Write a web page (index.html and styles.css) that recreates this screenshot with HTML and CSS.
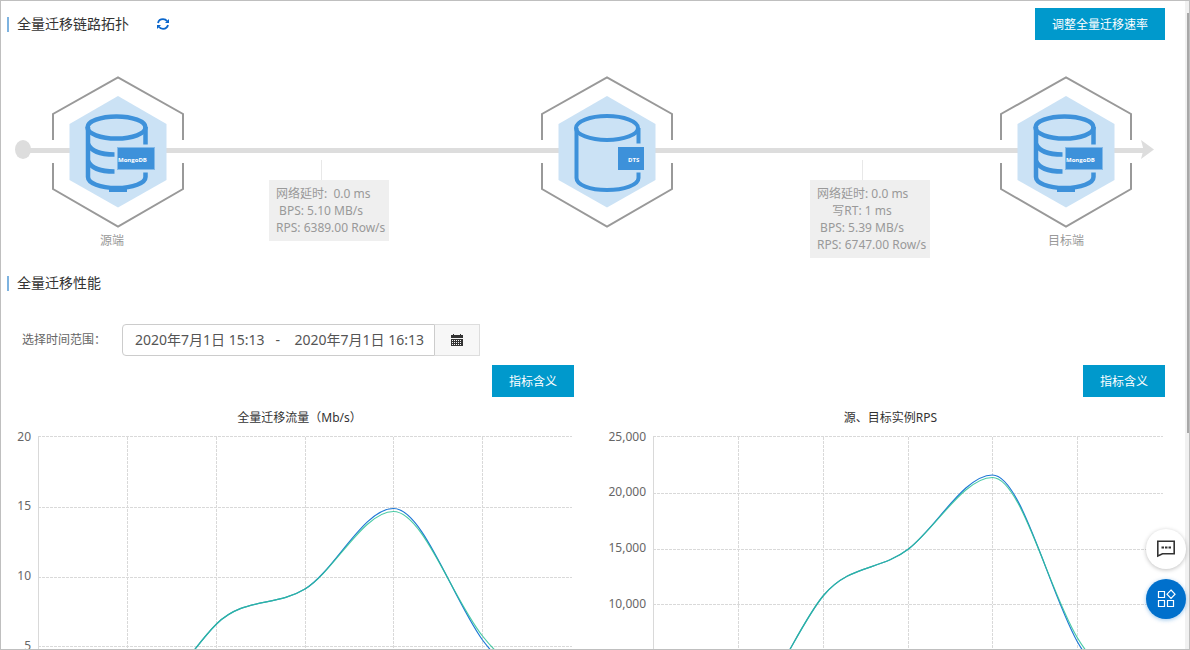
FILE: index.html
```html
<!DOCTYPE html>
<html lang="zh-CN">
<head>
<meta charset="utf-8">
<title>全量迁移</title>
<meta name="viewport" content="width=device-width, initial-scale=1">
<link rel="stylesheet" href="styles.css">
</head>
<body>
<div class="window">
  <main class="content">
    <header class="toolbar">
      <h2 class="section-title">全量迁移链路拓扑</h2>
      <button class="refresh" type="button" aria-label="刷新">
        <svg width="12" height="12" viewBox="0 0 12 12" fill="none" stroke="#0a66cc" stroke-width="1.8">
          <path d="M1 5C1.600 2.500 3.600 1.200 6 1.200C7.800 1.200 9.200 2 10.200 3.300"/>
          <path d="M11 7C10.400 9.500 8.400 10.800 6 10.800C4.200 10.800 2.800 10 1.800 8.700"/>
          <path d="M12 1V5H8ZM0 11V7H4Z" fill="#0a66cc" stroke="none"/>
        </svg>
      </button>
      <button class="primary toolbar-action" type="button">调整全量迁移速率</button>
    </header>

    <section class="topology">
      <svg class="stub" width="36" height="152" viewBox="0 0 36 152" fill="#ddd">
        <ellipse cx="8" cy="73.500" rx="8" ry="9.500"/>
        <rect x="8" y="72" width="28" height="5"/>
      </svg>
      <div class="node">
        <svg width="134" height="152" viewBox="0 0 134 152">
          <use href="#frame"/>
          <use href="#mongo"/>
        </svg>
        <span class="node-label">源端&emsp;</span>
      </div>
      <div class="link link-source">
        <div class="line"></div>
        <div class="metrics">
          <p>网络延时:&nbsp; 0.0 ms</p>
          <p>BPS: 5.10 MB/s</p>
          <p>RPS: 6389.00 Row/s</p>
        </div>
      </div>
      <div class="node">
        <svg width="134" height="152" viewBox="0 0 134 152">
          <use href="#frame"/>
          <g fill="none" stroke="#3d91da" stroke-width="4">
            <ellipse cx="67" cy="52" rx="31" ry="12"/>
            <path d="M36.500 52V102C36.500 109 50 114 67 114S98.500 109 98.500 102V96.500M98.500 52V67.500"/>
          </g>
          <rect x="78" y="71" width="26" height="23" fill="#3d91da"/>
          <text class="tag" x="88" y="86">DTS</text>
        </svg>
      </div>
      <div class="link link-target">
        <div class="line"></div>
        <div class="metrics">
          <p>网络延时: 0.0 ms</p>
          <p>写RT: 1 ms</p>
          <p>BPS: 5.39 MB/s</p>
          <p>RPS: 6747.00 Row/s</p>
        </div>
      </div>
      <div class="node">
        <svg width="134" height="152" viewBox="0 0 134 152">
          <use href="#frame"/>
          <use href="#mongo"/>
        </svg>
        <span class="node-label">目标端</span>
      </div>
      <svg class="stub" width="21" height="152" viewBox="0 0 21 152" fill="#ddd">
        <rect y="72" width="12" height="5"/>
        <path d="M8 64L21 73.500L8 83L10.500 73.500Z"/>
      </svg>
    </section>

    <h2 class="section-title">全量迁移性能</h2>

    <form class="range">
      <label for="range">选择时间范围：</label>
      <div class="range-group">
        <input id="range" type="text" value="2020年7月1日 15:13 &nbsp; - &nbsp;&nbsp; 2020年7月1日 16:13">
        <button type="button" aria-label="打开日历">
          <svg width="12" height="12" viewBox="0 0 12 12" fill="#333">
            <path d="M0 1H2V0H3V1H9V0H10V1H12V4H0Z"/>
            <path d="M0 5H12V12H0Z"/>
            <path d="M1 6.500H11M1 8.500H11M1 10.500H11" stroke="#f7f7f7" stroke-dasharray="1 1" stroke-width="1"/>
          </svg>
        </button>
      </div>
    </form>

    <div class="charts">
      <section class="chart">
        <button class="primary" type="button">指标含义</button>
        <h3>全量迁移流量（Mb/s）</h3>
        <svg viewBox="0 0 567 300">
          <path class="grid" d="M31 8.500H565M31 79.500H565M31 149.500H565M31 218.500H565M31 288.500H565M120.500 9V288M209.500 9V288M298.500 9V288M386.500 9V288M475.500 9V288"/>
          <path class="axis" d="M31.500 9V288"/>
          <g class="ticks"><text x="24" y="13">20</text><text x="24" y="82">15</text><text x="24" y="152">10</text><text x="24" y="222">5</text></g>
          <path class="series-a" d="M120.500 284C150 284 180 225 209.500 196C237 169 268.500 179 298 161C327.500 143 356.500 80.500 386.500 80.500C415.500 80.500 445.500 170 475.500 212C504 250 535 262 565 270"/>
          <path class="series-b" d="M120.500 284C150 284 180 225 209.500 196C237 169 268.500 179 298 161C327.500 143 356.500 83.500 386.500 83.500C415.500 83.500 445.500 170 475.500 208C504 244 535 258 565 266"/>
        </svg>
      </section>
      <section class="chart">
        <button class="primary" type="button">指标含义</button>
        <h3>源、目标实例RPS</h3>
        <svg viewBox="0 0 567 300">
          <path class="grid" d="M55 8.500H565M55 65.500H565M55 121.500H565M55 176.500H565M55 232.500H565M55 288.500H565M140.500 9V288M225.500 9V288M310.500 9V288M394.500 9V288M479.500 9V288"/>
          <path class="axis" d="M55.500 9V288"/>
          <g class="ticks"><text x="48" y="13">25,000</text><text x="48" y="68">20,000</text><text x="48" y="124">15,000</text><text x="48" y="180">10,000</text></g>
          <path class="series-a" d="M140.500 281C169 281 198 200 225.500 167.500C252 136 282 143 310.500 121C338.500 99 366.500 47 394.500 47C423 47 451 163 479.500 214C503 255 537 268 565 274"/>
          <path class="series-b" d="M140.500 281C169 281 198 200 225.500 167.500C252 136 282 143 310.500 121C338.500 99 366.500 49.500 394.500 49.500C423 49.500 451 163 479.500 210C505 252 537 265 565 272"/>
        </svg>
      </section>
    </div>
  </main>
  <div class="scroll-track"><div class="scroll-thumb"></div></div>

  <div class="floating">
    <button class="round" type="button" aria-label="咨询">
      <svg width="20" height="20" viewBox="0 0 20 20" fill="none" stroke="#333" stroke-width="1.6">
        <path d="M1.800 17V2.300H18.200V14.700H6.500Z"/>
        <path d="M5.500 8.500H8M9 8.500H11.500M12.500 8.500H15" stroke-width="2.200"/>
      </svg>
    </button>
    <button class="round round-blue" type="button" aria-label="应用">
      <svg width="20" height="20" viewBox="0 0 20 20" fill="none" stroke="#fff" stroke-width="1.200">
        <path d="M2.500 2.500H8.500V8.500H2.500ZM2.500 11.500H8.500V17.500H2.500ZM11.500 11.500H17.500V17.500H11.500ZM15 1L19 5.200L15 9.400L11 5.200Z"/>
      </svg>
    </button>
  </div>
</div>

<svg class="defs" width="0" height="0" aria-hidden="true">
  <defs>
    <g id="frame">
      <path d="M0 72H19V77H0ZM115 72H134V77H115Z" fill="#ddd"/>
      <path d="M2 64V38L67 1.500L132 38V64M2 87V113L67 150.500L132 113V87" fill="none" stroke="#999" stroke-width="2"/>
      <path d="M67 20L115.500 48V104L67 131.500L18.500 104V48Z" fill="#cbe2f5"/>
    </g>
    <g id="mongo">
      <g fill="none" stroke="#3d91da" stroke-width="4.500">
        <ellipse cx="65.500" cy="51.500" rx="29" ry="11"/>
        <path d="M37 51V101C37 107 49 112 65.500 112S94.500 107 94.500 101V96.500M94.500 51V68.500"/>
        <path d="M37 68C40 75 49 78.500 63.500 78.500M37 85C40 92 49 95.500 63.500 95.500"/>
      </g>
      <rect x="58" y="112" width="18" height="4" fill="#3d91da"/>
      <rect x="66.500" y="71.500" width="37" height="22" fill="#3d91da" stroke="#83b9e8"/>
      <text class="tag" x="67" y="86">MongoDB</text>
    </g>
  </defs>
</svg>
</body>
</html>
```
FILE: styles.css
```css
* { box-sizing: border-box; }

body {
  margin: 0;
  background: #fff;
  color: #333;
  font: 12px/20px "Noto Sans", "Noto Sans CJK SC", sans-serif;
}

button, input { font: inherit; color: inherit; margin: 0; }
button { border: 0; padding: 0; background: none; cursor: pointer; }
h2, h3, p { margin: 0; font-weight: 400; }
svg { display: block; }
.defs { position: absolute; }

.window {
  display: flex;
  height: 100vh;
  overflow: hidden;
  border: 1px solid #bfbfbf;
}
.content { flex: 1; min-width: 0; padding: 7px 20px 0 6px; }

.scroll-track { width: 4px; padding: 12px 0 0 2px; background: #f1f1f1; }
.scroll-thumb { height: 66%; background: #a8a8a8; }

.toolbar { display: flex; align-items: center; }
.toolbar-action { margin-left: auto; }
.refresh { margin-left: 28px; }

.section-title {
  display: flex;
  align-items: center;
  gap: 8px;
  font-size: 14px;
  line-height: 20px;
}
.section-title::before { content: ""; width: 2px; height: 15px; background: #7eb3e0; }

.primary {
  height: 32px;
  padding: 1px 17px 0;
  background: #0099cc;
  color: #fff;
}

.topology {
  display: flex;
  align-items: flex-start;
  margin: 36px 11px 15px 8px;
  color: #999;
}
.stub, .node { flex: none; }
.node { display: flex; flex-direction: column; align-items: center; gap: 5px; }
.node-label { line-height: 16px; }
.tag { font: bold 6px "Open Sans", sans-serif; fill: #fff; }

.link { min-width: 0; padding-top: 72px; }
.link-source { flex: 355; }
.link-target { flex: 325; }
.line { height: 5px; background: #ddd; }
.metrics {
  width: 120px;
  margin-top: 27px;
  padding: 5px 23px 5px 7px;
  position: relative;
  background: #efefef;
  line-height: 17px;
  white-space: nowrap;
}
.metrics p { display: flex; justify-content: safe center; }
.metrics::before {
  content: "";
  position: absolute;
  left: 52px;
  bottom: 100%;
  width: 1px;
  height: 20px;
  background: #e8e8e8;
}
.link-source .metrics { margin-left: 84px; }
.link-target .metrics { margin-left: 136px; }

.range { display: flex; align-items: center; gap: 16px; margin: 31px 0 9px 15px; color: #666; }
.range-group { display: flex; height: 32px; }
.range input {
  width: 313px;
  padding: 0 8px 0 12px;
  border: 1px solid #ccc;
  border-radius: 4px 0 0 4px;
  background: #fff;
  color: #555;
  font-size: 14px;
}
.range button {
  display: grid;
  place-items: center;
  width: 45px;
  border: 1px solid #ddd;
  border-left: 0;
  background: #f7f7f7;
}

.charts { display: grid; grid-template-columns: 1fr 1fr; gap: 24px; }
.chart { display: flex; flex-direction: column; min-width: 0; }
.chart .primary { align-self: flex-end; }
.chart h3 { margin-top: 11px; padding-left: 18px; font-size: 12px; line-height: 20px; text-align: center; }
.chart svg { width: 100%; }
.grid { fill: none; stroke: #d9d9d9; stroke-dasharray: 3 1; }
.axis { stroke: #d9d9d9; }
.ticks { font-size: 12px; fill: #666; text-anchor: end; }
.series-a, .series-b { fill: none; stroke-width: 1.2; }
.series-a { stroke: #1f78d6; }
.series-b { stroke: #2cc295; stroke-opacity: .85; }

.floating {
  position: fixed;
  right: 4px;
  bottom: 31px;
  display: grid;
  gap: 10px;
}
.round {
  display: grid;
  place-items: center;
  width: 40px;
  height: 40px;
  border-radius: 50%;
  background: #fff;
  box-shadow: 0 1px 4px rgba(0, 0, 0, .25);
}
.round-blue { background: #0070cc; box-shadow: 0 1px 4px rgba(0, 112, 204, .4); }
```
